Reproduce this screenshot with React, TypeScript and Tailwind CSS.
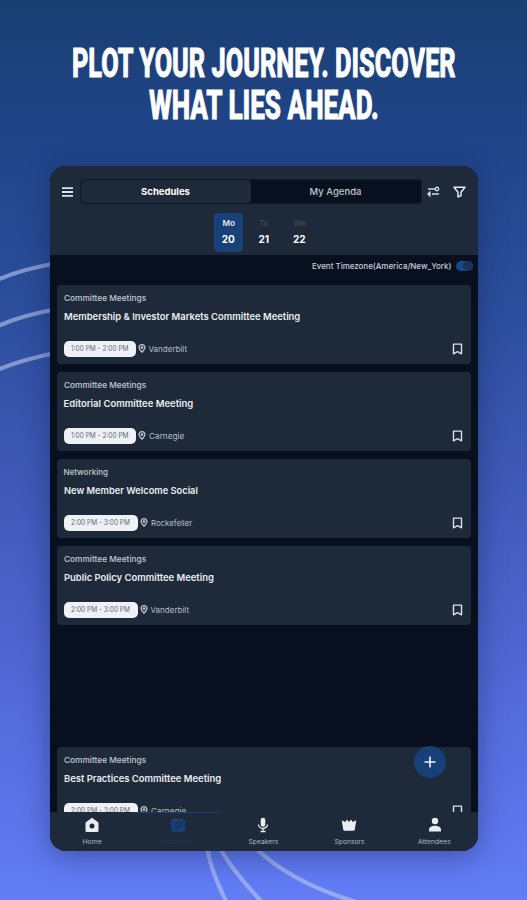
import { useLayoutEffect, useRef, useState } from "react";

type FitProps = { text: string; width: number; className?: string; origin?: "left" | "center" };

// Scales a single line of text horizontally so that it fills the given width.
function Fit({ text, width, className = "", origin = "left" }: FitProps) {
  const ref = useRef<HTMLSpanElement>(null);
  const [scale, setScale] = useState(1);
  useLayoutEffect(() => {
    if (ref.current) setScale(width / ref.current.offsetWidth);
  }, [text, width]);
  return (
    <span className={`flex whitespace-nowrap ${origin === "center" ? "justify-center" : "justify-start"}`} style={{ width }}>
      <span
        ref={ref}
        className={`shrink-0 ${origin === "center" ? "origin-center" : "origin-left"} ${className}`}
        style={{ transform: `scaleX(${scale})` }}
      >
        {text}
      </span>
    </span>
  );
}

type Session = {
  track: string;
  trackW: number;
  title: string;
  titleW: number;
  time: string;
  room: string;
  roomW: number;
  wide?: boolean;
};

const sessions: Session[] = [
  { track: "Committee Meetings", trackW: 82, title: "Membership & Investor Markets Committee Meeting", titleW: 236, time: "1:00 PM - 2:00 PM", room: "Vanderbilt", roomW: 39 },
  { track: "Committee Meetings", trackW: 82, title: "Editorial Committee Meeting", titleW: 130, time: "1:00 PM - 2:00 PM", room: "Carnegie", roomW: 35 },
  { track: "Networking", trackW: 44, title: "New Member Welcome Social", titleW: 134, time: "2:00 PM - 3:00 PM", room: "Rockefeller", roomW: 41, wide: true },
  { track: "Committee Meetings", trackW: 82, title: "Public Policy Committee Meeting", titleW: 150, time: "2:00 PM - 3:00 PM", room: "Vanderbilt", roomW: 39, wide: true },
];

const lastSession: Session = {
  track: "Committee Meetings", trackW: 82, title: "Best Practices Committee Meeting", titleW: 157, time: "2:00 PM - 3:00 PM", room: "Carnegie", roomW: 35, wide: true,
};

function Card({ s }: { s: Session }) {
  return (
    <div className="flex h-[79px] shrink-0 flex-col rounded bg-[#1e2a39] px-[7px] pt-[7px]">
      <div className="h-3 text-[8px] leading-3 font-medium text-[#c4cad2]"><Fit text={s.track} width={s.trackW} /></div>
      <div className="mt-1.5 h-3.5 text-[9.5px] leading-[14px] font-semibold text-[#e9edf2]"><Fit text={s.title} width={s.titleW} /></div>
      <div className="mt-4 flex h-[17px] items-center">
        <div className={`flex h-4 items-center justify-center rounded-[5px] bg-[#eef1f5] pt-px text-[7px] leading-[10px] text-[#626873] ${s.wide ? "w-[74px]" : "w-[72px]"}`}>
          <Fit text={s.time} width={s.wide ? 59 : 58} origin="center" />
        </div>
        <svg className="ml-[2px] h-[9px] w-[8px]" viewBox="0 0 8 9" fill="none" stroke="#c5ccd5" strokeWidth="1.2">
          <path d="M4 8.2C2.4 6.5 1 5.2 1 3.6a3 3 0 0 1 6 0C7 5.2 5.6 6.5 4 8.2Z" />
          <circle cx="4" cy="3.6" r=".8" />
        </svg>
        <div className="ml-[3px] text-[8px] leading-3 text-[#b7bec8]"><Fit text={s.room} width={s.roomW} /></div>
        <svg className="mr-[0.5px] ml-auto h-3 w-[11px]" viewBox="0 0 11 12" fill="none" stroke="#dce1e7" strokeWidth="1.4" strokeLinejoin="round">
          <path d="M1.5 1.1h8v9.7L5.5 8.7l-4 2.1Z" />
        </svg>
      </div>
    </div>
  );
}

const days = [
  { name: "Mo", num: "20", active: true },
  { name: "Tu", num: "21", active: false },
  { name: "We", num: "22", active: false },
];

export default function App() {
  return (
    <div className="relative flex h-[900px] w-[527px] flex-col items-center overflow-hidden bg-linear-[180deg,#193f72_0%,#21458a_17%,#2c4e9c_34%,#3e58b4_52%,#4d64ce_70%,#5b72e7_88%,#627df5_100%] font-['Inter','Liberation_Sans',sans-serif]">
      <svg className="absolute inset-0 h-full w-full" viewBox="0 0 527 900" fill="none" stroke="#bdcbed" strokeOpacity=".58" strokeWidth="4.2">
        <path d="M-2 279.500Q23 269 55 263.500M-2 326Q23 315 55 309.500M-2 369.500Q23 359.500 55 353" />
        <path d="M207 845Q209 867 227 903M218 845Q233 872 263 903M252 845Q292 884 360 903" />
      </svg>

      <h1 className="relative flex h-[126px] flex-col items-center gap-px pt-[43px] font-['Roboto','Liberation_Sans',sans-serif] text-[41px] leading-[41px] font-extrabold text-white [-webkit-text-stroke:0.9px_white]">
        <Fit text="PLOT YOUR JOURNEY. DISCOVER" width={384} origin="center" />
        <Fit text="WHAT LIES AHEAD." width={230} origin="center" />
      </h1>

      <main className="relative mt-10 flex h-[685px] w-[428px] flex-col overflow-hidden rounded-2xl bg-[#08101f] shadow-[0_5px_28px_rgba(12,25,65,0.4)]">
        <header className="h-[89px] shrink-0 bg-[#1e2a39]">
          <div className="flex items-center pt-[13px]">
            <svg className="ml-3 h-[10px] w-[11px]" viewBox="0 0 11 10" stroke="#dce2e8" strokeWidth="1.8">
              <path d="M0 1.200h11M0 5h11M0 8.800h11" />
            </svg>
            <div className="ml-[7px] flex h-[25px] w-[342px] rounded border border-[#111d2c] bg-[#08101f]">
              <div className="flex w-[170px] items-center justify-center rounded bg-[#1e2a39] pt-0.5 text-[9.5px] font-bold text-white">
                <Fit text="Schedules" width={49} origin="center" />
              </div>
              <div className="flex flex-1 items-center justify-center pt-0.5 text-[9.5px] font-medium text-[#c1c7ce]">
                <Fit text="My Agenda" width={52} origin="center" />
              </div>
            </div>
            <svg className="ml-[5px] h-[11px] w-[13px]" viewBox="0 0 13 11" fill="none" stroke="#d5dbe2" strokeWidth="1.4">
              <path d="M1 3h7M5 8h7M3.500 5.500 1 8l2.500 2.500M1 8h3" />
              <circle cx="10" cy="3" r="1.700" />
            </svg>
            <svg className="ml-[13px] h-3 w-[13px]" viewBox="0 0 13 12" fill="none" stroke="#e5e9ee" strokeWidth="1.5" strokeLinejoin="round">
              <path d="M1 1.200h11L8 6.300v3.500l-3 1.100V6.300Z" />
            </svg>
          </div>
          <div className="mt-[9px] ml-[164px] flex gap-[6px]">
            {days.map((d) => (
              <div key={d.num} className={`flex h-[39px] w-[29.5px] flex-col items-center rounded pt-[5px] ${d.active ? "bg-[#184079]" : ""}`}>
                <span className={`mt-px text-[7.5px] leading-[10px] ${d.active ? "font-semibold text-[#e2e9f3]" : "text-[#46515f]"}`}><Fit text={d.name} width={d.name === "Tu" ? 9 : 12} origin="center" /></span>
                <span className="mt-1 text-[10px] leading-3 font-bold text-white"><Fit text={d.num} width={d.num === "21" ? 11 : 13} origin="center" /></span>
              </div>
            ))}
          </div>
        </header>

        <section className="flex min-h-0 flex-1 flex-col overflow-hidden px-[7px]">
          <div className="mr-[-2px] flex h-[30px] shrink-0 items-start justify-end pt-[5px] text-[8px] leading-3 font-medium text-[#cbd1da]">
            <Fit text="Event Timezone(America/New_York)" width={139} />
            <span className="mt-[1px] ml-[5px] flex h-[10px] w-[17px] items-center justify-end rounded-full bg-[#174a8a]">
              <span className="size-[10px] rounded-full bg-[#1c3457]" />
            </span>
          </div>
          <div className="flex flex-col gap-2">
            {sessions.map((s) => <Card key={s.title} s={s} />)}
          </div>
          <div className="mt-[122px]"><Card s={lastSession} /></div>
        </section>

        <nav className="grid h-[39px] shrink-0 grid-cols-5 bg-[#1e2a39] text-[6.5px] leading-2 text-[#aeb8c4]">
          <div className="flex flex-col items-center pt-[5px]">
            <svg className="h-4 w-4" viewBox="0 0 16 16"><path fill="#e8edf2" d="M8 .8 14.500 5.500v8A1.500 1.500 0 0 1 13 15H3a1.500 1.500 0 0 1-1.500-1.500v-8Z" /><circle cx="8" cy="9" r="2.500" fill="#1e2a39" /></svg>
            <span className="mt-[5px]"><Fit text="Home" width={19} origin="center" /></span>
          </div>
          <div className="flex flex-col items-center border-t border-[#174075] pt-1 text-[#19365f]">
            <svg className="h-4 w-4" viewBox="0 0 16 16"><path fill="#173f78" d="M3 2h1V1h2v1h4V1h2v1h1a2 2 0 0 1 2 2v9a2 2 0 0 1-2 2H3a2 2 0 0 1-2-2V4a2 2 0 0 1 2-2Z" /><path d="M4 6h8M5 9.500l2 2 4-4" fill="none" stroke="#1b2f4b" strokeWidth="1.200" /></svg>
            <span className="mt-[5px]"><Fit text="Schedules" width={32} origin="center" /></span>
          </div>
          <div className="flex flex-col items-center pt-[5px]">
            <svg className="h-4 w-4" viewBox="0 0 16 16" fill="none" stroke="#e8edf2"><path d="M8 3v4.500" strokeWidth="4.600" strokeLinecap="round" /><path d="M3.500 7.500a4.500 4 0 0 0 9 0M8 11.500V15M5.500 14.500h5" strokeWidth="1.300" /></svg>
            <span className="mt-[5px]"><Fit text="Speakers" width={30} origin="center" /></span>
          </div>
          <div className="flex flex-col items-center pt-[5px]">
            <svg className="h-4 w-4" viewBox="0 0 16 16"><path fill="#e8edf2" d="M.7 3.200 4.300 5 6 2.500 8 5l2-2.500L11.700 5l3.600-1.800-1.500 9.300a1.500 1.500 0 0 1-1.500 1.200H3.700a1.500 1.500 0 0 1-1.500-1.200Z" /></svg>
            <span className="mt-[5px]"><Fit text="Sponsors" width={30} origin="center" /></span>
          </div>
          <div className="flex flex-col items-center pt-[5px]">
            <svg className="h-4 w-4" viewBox="0 0 16 16" fill="#e8edf2"><circle cx="8" cy="4" r="3.200" /><path d="M2 14.500v-1.700C2 10.200 5 8.800 8 8.800s6 1.400 6 4v1.700Z" /></svg>
            <span className="mt-[5px]"><Fit text="Attendees" width={33} origin="center" /></span>
          </div>
        </nav>
        <button className="absolute right-[32px] bottom-[73px] flex size-8 items-center justify-center rounded-full bg-[#173f78]" aria-label="Add">
          <svg className="size-3" viewBox="0 0 12 12" stroke="#edf3fb" strokeWidth="1.600"><path d="M6 .5v11M.5 6h11" /></svg>
        </button>
      </main>
    </div>
  );
}
